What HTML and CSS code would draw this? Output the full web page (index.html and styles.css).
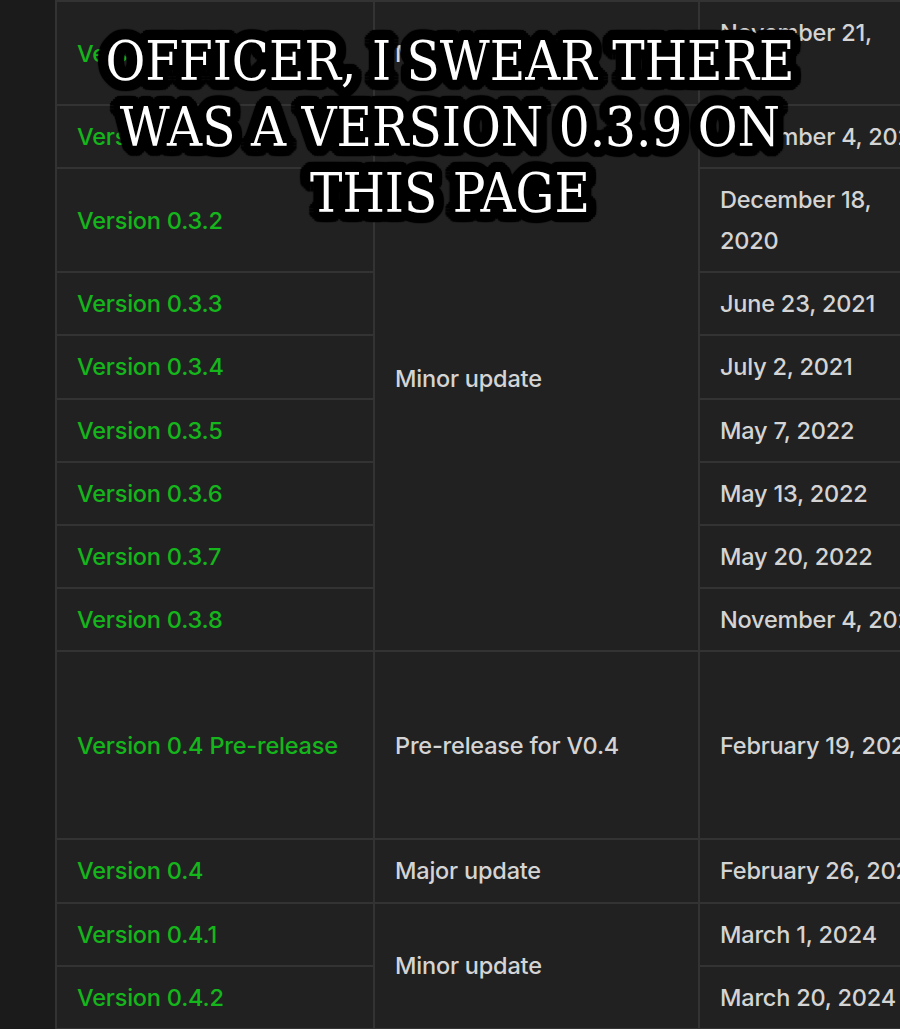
FILE: index.html
```html
<!DOCTYPE html>
<html>
<head>
    <title>Version history</title>
    <link rel="stylesheet" href="styles.css">
</head>
<body>
    <div class="page">
        <table class="versions">
            <colgroup>
                <col class="col-ver">
                <col class="col-desc">
                <col class="col-date">
            </colgroup>
            <tr class="tall">
                <td class="ver">Version 0.3</td>
                <td class="desc">Major update</td>
                <td class="date">November 21,<br>2019</td>
            </tr>
            <tr>
                <td class="ver">Version 0.3.1</td>
                <td class="desc" rowspan="8">Minor update</td>
                <td class="date">November 4, 2020</td>
            </tr>
            <tr class="tall">
                <td class="ver">Version 0.3.2</td>
                <td class="date">December 18,<br>2020</td>
            </tr>
            <tr>
                <td class="ver">Version 0.3.3</td>
                <td class="date">June 23, 2021</td>
            </tr>
            <tr>
                <td class="ver">Version 0.3.4</td>
                <td class="date">July 2, 2021</td>
            </tr>
            <tr>
                <td class="ver">Version 0.3.5</td>
                <td class="date">May 7, 2022</td>
            </tr>
            <tr>
                <td class="ver">Version 0.3.6</td>
                <td class="date">May 13, 2022</td>
            </tr>
            <tr>
                <td class="ver">Version 0.3.7</td>
                <td class="date">May 20, 2022</td>
            </tr>
            <tr>
                <td class="ver">Version 0.3.8</td>
                <td class="date">November 4, 2022</td>
            </tr>
            <tr class="huge">
                <td class="ver">Version 0.4 Pre-release</td>
                <td class="desc">Pre-release for V0.4</td>
                <td class="date">February 19, 2024</td>
            </tr>
            <tr>
                <td class="ver">Version 0.4</td>
                <td class="desc">Major update</td>
                <td class="date">February 26, 2024</td>
            </tr>
            <tr>
                <td class="ver">Version 0.4.1</td>
                <td class="desc" rowspan="2">Minor update</td>
                <td class="date">March 1, 2024</td>
            </tr>
            <tr>
                <td class="ver">Version 0.4.2</td>
                <td class="date">March 20, 2024</td>
            </tr>
        </table>
    </div>

    <div class="caption">OFFICER, I SWEAR THERE<br>WAS A VERSION 0.3.9 ON<br>THIS PAGE</div>
</body>
</html>
```

FILE: styles.css
```css
body {
    margin: 0;
    height: 1029px;
    overflow: hidden;
    background: #1b1b1b;
    font-family: Inter, 'Noto Sans', sans-serif;
}
.page {
    padding-left: 55px;
}
.versions {
    table-layout: fixed;
    width: 1045px;
    border-collapse: collapse;
    background: #212121;
    font-size: 23.5px;
    font-weight: 500;
    letter-spacing: -0.2px;
    line-height: 41px;
}
.col-ver {
    width: 318px;
}
.col-desc {
    width: 325px;
}
.col-date {
    width: 402px;
}
.versions td {
    border: 2px solid #333;
    padding: 0 20px;
    height: 61.2px;
    vertical-align: middle;
    white-space: nowrap;
    overflow: hidden;
}
.versions tr.tall td {
    height: 102px;
}
.versions tr.huge td {
    height: 186px;
}
.ver {
    color: #15b51c;
}
.desc,
.date {
    color: #d4d4d4;
}
/* meme caption laid over the table */
.caption {
    position: absolute;
    top: 29px;
    left: 0;
    width: 900px;
    text-align: center;
    font-family: 'DejaVu Serif', serif;
    font-stretch: condensed;
    font-size: 54px;
    line-height: 66px;
    color: #fff;
    text-shadow:
        10px 0 1px #000, 10px 3px 1px #000, 9px 5px 1px #000, 7px 7px 1px #000,
        5px 9px 1px #000, 3px 10px 1px #000, 0 10px 1px #000, -3px 10px 1px #000,
        -5px 9px 1px #000, -7px 7px 1px #000, -9px 5px 1px #000, -10px 3px 1px #000,
        -10px 0 1px #000, -10px -3px 1px #000, -9px -5px 1px #000, -7px -7px 1px #000,
        -5px -9px 1px #000, -3px -10px 1px #000, 0 -10px 1px #000, 3px -10px 1px #000,
        5px -9px 1px #000, 7px -7px 1px #000, 9px -5px 1px #000, 10px -3px 1px #000,
        5px 0 0 #000, -5px 0 0 #000, 0 5px 0 #000, 0 -5px 0 #000,
        4px 4px 0 #000, -4px 4px 0 #000, 4px -4px 0 #000, -4px -4px 0 #000,
        2px 0 0 #000, -2px 0 0 #000, 0 2px 0 #000, 0 -2px 0 #000;
}
```
